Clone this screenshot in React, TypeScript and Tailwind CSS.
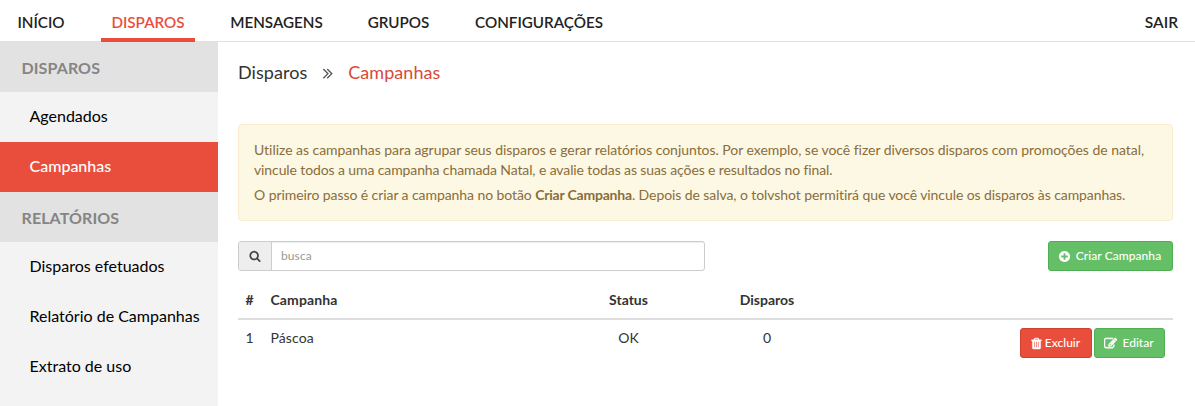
import type { ReactNode } from 'react'

const icons = {
  search:
    'M1216 832q0-185-131.5-316.5t-316.5-131.5-316.5 131.5-131.5 316.5 131.5 316.5 316.5 131.5 316.5-131.5 131.5-316.5zm512 832q0 52-38 90t-90 38q-54 0-90-38l-343-342q-179 124-399 124-143 0-273.5-55.5t-225-150-150-225-55.5-273.5 55.5-273.5 150-225 225-150 273.5-55.5 273.5 55.5 225 150 150 225 55.5 273.5q0 220-124 399l343 343q37 37 37 90z',
  plus:
    'M1344 960v-128q0-26-19-45t-45-19h-256v-256q0-26-19-45t-45-19h-128q-26 0-45 19t-19 45v256h-256q-26 0-45 19t-19 45v128q0 26 19 45t45 19h256v256q0 26 19 45t45 19h128q26 0 45-19t19-45v-256h256q26 0 45-19t19-45zm320-64q0 209-103 385.5t-279.5 279.5-385.5 103-385.5-103-279.5-279.5-103-385.5 103-385.5 279.5-279.5 385.5-103 385.5 103 279.5 279.5 103 385.5z',
  trash:
    'M704 1376v-704q0-14-9-23t-23-9h-64q-14 0-23 9t-9 23v704q0 14 9 23t23 9h64q14 0 23-9t9-23zm256 0v-704q0-14-9-23t-23-9h-64q-14 0-23 9t-9 23v704q0 14 9 23t23 9h64q14 0 23-9t9-23zm256 0v-704q0-14-9-23t-23-9h-64q-14 0-23 9t-9 23v704q0 14 9 23t23 9h64q14 0 23-9t9-23zm-544-992h448l-48-117q-7-9-17-11h-317q-10 2-17 11zm928 32v64q0 14-9 23t-23 9h-96v948q0 83-47 143.5t-113 60.5h-832q-66 0-113-58.5t-47-141.5v-952h-96q-14 0-23-9t-9-23v-64q0-14 9-23t23-9h309l70-167q15-37 54-63t79-26h320q40 0 79 26t54 63l70 167h309q14 0 23 9t9 23z',
  edit:
    'M888 1184l116-116-152-152-116 116v56h96v96h56zm440-720q-16-16-33 1l-350 350q-17 17-1 33t33-1l350-350q17-17 1-33zm80 594v190q0 119-84.5 203.5t-203.5 84.5h-832q-119 0-203.5-84.5t-84.5-203.5v-832q0-119 84.5-203.5t203.5-84.5h832q63 0 117 25 15 7 18 23 3 17-9 29l-49 49q-14 14-32 8-23-6-45-6h-832q-66 0-113 47t-47 113v832q0 66 47 113t113 47h832q66 0 113-47t47-113v-126q0-13 9-22l64-64q15-15 35-7t20 29zm-96-738l288 288-672 672h-288v-288zm444 132l-92 92-288-288 92-92q28-28 68-28t68 28l152 152q28 28 28 68t-28 68z',
  angles:
    'M979 960q0 13-10 23l-466 466q-10 10-23 10t-23-10l-50-50q-10-10-10-23t10-23l393-393-393-393q-10-10-10-23t10-23l50-50q10-10 23-10t23 10l466 466q10 10 10 23zm384 0q0 13-10 23l-466 466q-10 10-23 10t-23-10l-50-50q-10-10-10-23t10-23l393-393-393-393q-10-10-10-23t10-23l50-50q10-10 23-10t23 10l466 466q10 10 10 23z',
}

function Icon({ name, className }: { name: keyof typeof icons; className: string }) {
  return (
    <svg viewBox="0 0 1792 1792" fill="currentColor" className={`shrink-0 ${className}`}>
      <path d={icons[name]} />
    </svg>
  )
}

const navItems = [
  { label: 'INÍCIO', width: 'w-[68px]' },
  { label: 'DISPAROS', width: 'w-[94px]' },
  { label: 'MENSAGENS', width: 'w-[111px]' },
  { label: 'GRUPOS', width: 'w-[81px]' },
  { label: 'CONFIGURAÇÕES', width: 'w-[148px]' },
]

const sections = [
  { title: 'DISPAROS', links: ['Agendados', 'Campanhas'] },
  { title: 'RELATÓRIOS', links: ['Disparos efetuados', 'Relatório de Campanhas', 'Extrato de uso'] },
]

function NavLink({ label, active, className }: { label: string; active?: boolean; className: string }) {
  return (
    <a
      className={`flex h-[42px] items-center justify-center border-b-4 pt-[7px] font-semibold ${
        active ? 'border-[#e94e3d] text-[#e94e3d]' : 'border-transparent'
      } ${className}`}
    >
      {label}
    </a>
  )
}

function Button({ color, className, children }: { color: 'green' | 'red'; className: string; children: ReactNode }) {
  return (
    <button
      className={`flex h-[30px] items-center justify-center rounded-[3px] border text-xs font-medium text-white ${
        color === 'green' ? 'border-[#4fae51] bg-[#65bf67]' : 'border-[#d04030] bg-[#e94e3d]'
      } ${className}`}
    >
      {children}
    </button>
  )
}

export default function App() {
  return (
    <div className="flex h-[406px] flex-col overflow-hidden bg-white font-['Lato',sans-serif] text-[#333] [font-variant-ligatures:none]">
      <header className="flex h-[42px] shrink-0 justify-between border-b border-[#e1e1e1] px-[7px] text-[#222]">
        <nav className="flex gap-[26px]">
          {navItems.map(({ label, width }) => (
            <NavLink key={label} label={label} active={label === 'DISPAROS'} className={`text-[15.2px] ${width}`} />
          ))}
        </nav>
        <NavLink label="SAIR" className="px-2.5 text-[15.5px]" />
      </header>

      <div className="flex min-h-0 flex-1">
        <aside className="w-[218px] shrink-0 bg-[#f3f3f3] text-base text-black">
          {sections.map((section) => (
            <div key={section.title}>
              <h2 className="flex h-[50px] items-center bg-[#e2e2e2] pt-0.5 pl-[21.5px] font-bold tracking-[0.1px] text-[#858585]">{section.title}</h2>
              {section.links.map((link) => (
                <a
                  key={link}
                  className={`flex h-[50px] items-center pb-0.5 pl-[29.5px] ${link === 'Campanhas' ? 'bg-[#e94e3d] font-medium text-white' : ''}`}
                >
                  {link}
                </a>
              ))}
            </div>
          ))}
        </aside>

        <main className="min-w-0 flex-1 pr-[22px] pl-5">
          <div className="flex h-[62px] items-center pb-0.5 text-lg tracking-[0.05px]">
            <span>Disparos</span>
            <Icon name="angles" className="mt-0.5 mr-[11px] ml-3 h-[18px] w-[18px] text-[#555]" />
            <span className="text-[#d9493a]">Campanhas</span>
          </div>

          <div className="mt-5 h-[97px] rounded border border-[#faebcc] bg-[#fcf8e3] px-[15px] py-[15px] text-sm leading-5 whitespace-nowrap text-[#8a6d3b]">
            <p className="tracking-[-0.04px]">
              Utilize as campanhas para agrupar seus disparos e gerar relatórios conjuntos. Por exemplo, se você fizer diversos disparos com promoções de natal,
              <br />
              <span className="tracking-[-0.11px]">vincule todos a uma campanha chamada Natal, e avalie todas as suas ações e resultados no final.</span>
            </p>
            <p className="mt-[5px] tracking-[-0.08px]">
              O primeiro passo é criar a campanha no botão <b className="tracking-[-0.2px]">Criar Campanha</b>. Depois de salva, o tolvshot permitirá que você vincule os disparos às campanhas.
            </p>
          </div>

          <div className="mt-5 flex justify-between">
            <div className="flex h-[30px] w-[467px] overflow-hidden rounded-[3px] border border-[#ccc]">
              <span className="flex w-[33px] items-center justify-center border-r border-[#ccc] bg-[#eee] text-[#444]">
                <Icon name="search" className="h-3 w-3" />
              </span>
              <input className="flex-1 px-[9px] text-xs tracking-[0.1px] shadow-[inset_0_1px_1px_rgba(0,0,0,0.075)] outline-none placeholder:text-[#999]" placeholder="busca" />
            </div>
            <Button color="green" className="w-[125px] gap-[5px] pr-0.5 tracking-[0.06px]">
              <Icon name="plus" className="h-[13px] w-[13px]" />
              Criar Campanha
            </Button>
          </div>

          <table className="mt-2.5 w-full table-fixed text-sm leading-5">
            <thead>
              <tr className="h-[38px] border-b-2 border-[#ddd]">
                <th className="w-6 px-[7.5px] pt-px text-left">#</th>
                <th className="w-[297px] pt-px pl-[8.5px] text-left tracking-[0.1px]">Campanha</th>
                <th className="w-[139px] pt-px">Status</th>
                <th className="w-[139px] pt-px pr-px">Disparos</th>
                <th />
              </tr>
            </thead>
            <tbody>
              <tr className="align-top">
                <td className="px-[7.5px] pt-2">1</td>
                <td className="pt-2 pl-[8.5px] tracking-[0.1px]">Páscoa</td>
                <td className="pt-2 text-center">OK</td>
                <td className="pt-2 pr-px text-center">0</td>
                <td className="pt-2 pr-2">
                  <div className="flex justify-end gap-0.5">
                    <Button color="red" className="w-[72px] gap-0.5 pr-0.5">
                      <Icon name="trash" className="h-[13px] w-[13px] stroke-current stroke-[50]" />
                      Excluir
                    </Button>
                    <Button color="green" className="w-[71px] gap-[5px] pr-px">
                      <Icon name="edit" className="h-[13px] w-[13px] stroke-current stroke-[80]" />
                      Editar
                    </Button>
                  </div>
                </td>
              </tr>
            </tbody>
          </table>
        </main>
      </div>
    </div>
  )
}
